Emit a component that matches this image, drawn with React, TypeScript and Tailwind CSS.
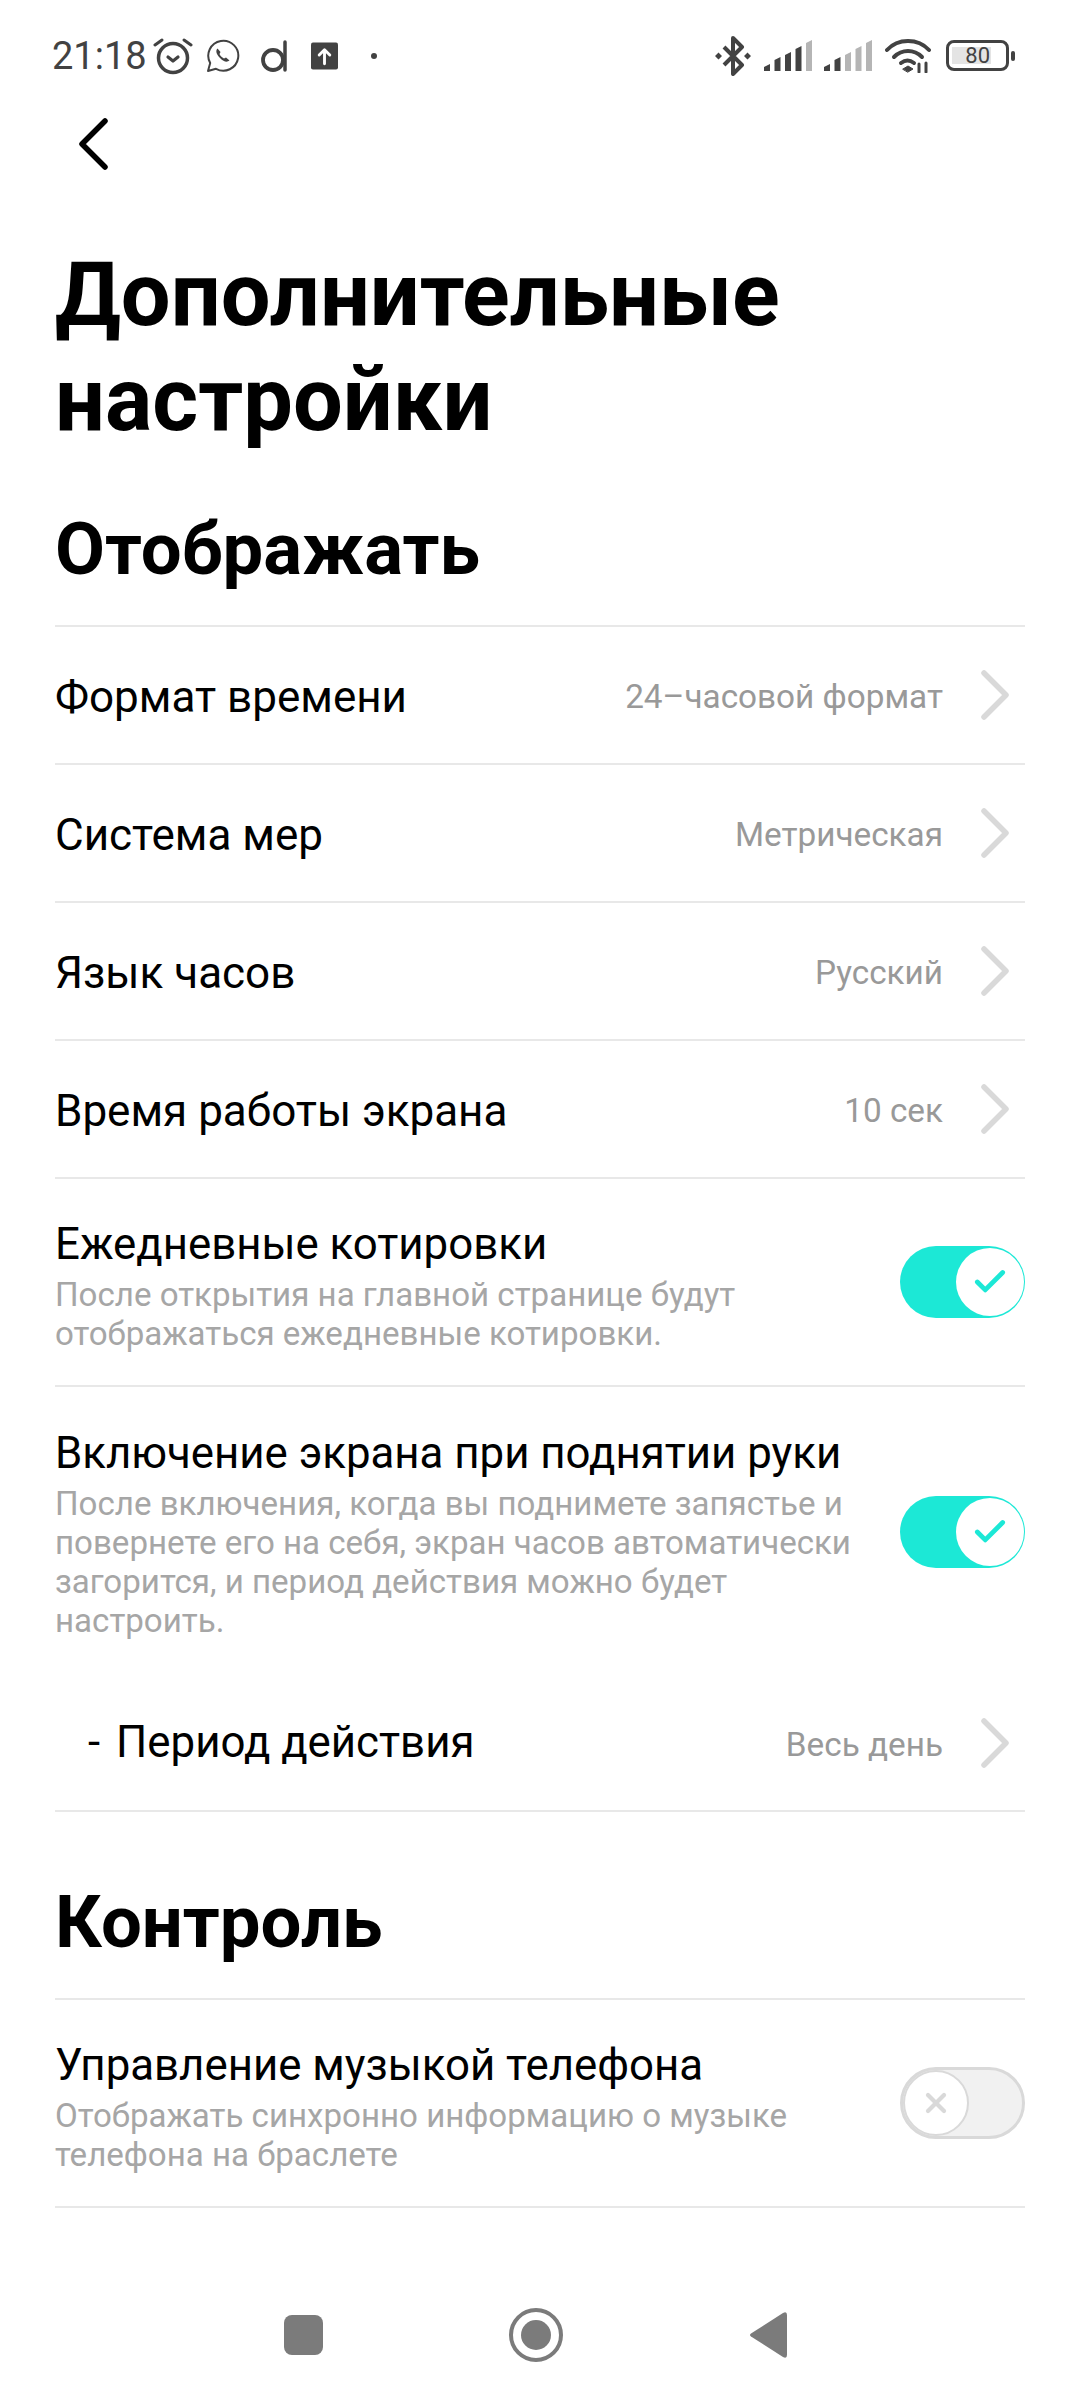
import { Check, X } from 'lucide-react';

const font = { fontFamily: 'Roboto, "Noto Sans", sans-serif' };

const Chevron = () => (
  <svg width="32" height="52" viewBox="0 0 32 52" className="shrink-0" fill="none">
    <path d="M4 4 L26 26 L4 48" stroke="#d9d9d9" strokeWidth="5.5" strokeLinecap="round" strokeLinejoin="round" />
  </svg>
);

const Toggle = ({ on }: { on: boolean }) =>
  on ? (
    <div className="flex h-[72px] w-[125px] shrink-0 items-center justify-end rounded-full bg-[#1ce8d6] p-[1px]">
      <div className="flex h-[68px] w-[68px] items-center justify-center rounded-full bg-white">
        <Check className="text-[#1ce8d6]" size={38} strokeWidth={3} />
      </div>
    </div>
  ) : (
    <div className="flex h-[72px] w-[125px] shrink-0 items-center justify-start rounded-full border-[3px] border-[#d9d9d9] bg-[#f1f1f1]">
      <div className="flex h-[66px] w-[66px] items-center justify-center rounded-full border-[2px] border-[#d9d9d9] bg-white">
        <X className="text-[#d9d9d9]" size={32} strokeWidth={3.2} />
      </div>
    </div>
  );

const Value = ({ text }: { text: string }) => (
  <div className="flex items-center gap-[37px] pr-[13px]">
    <span className="pt-[3px] text-[33.3px] leading-none text-[#999999]">{text}</span>
    <Chevron />
  </div>
);

const NavRow = ({ label, value }: { label: string; value: string }) => (
  <div className="flex h-[138px] items-center justify-between border-t-2 border-[#e8e8e8]">
    <span className="pt-[4px] text-[44px] leading-none text-black">{label}</span>
    <Value text={value} />
  </div>
);

const ToggleRow = ({ title, desc, on, className, textClass }: { title: string; desc: string[]; on: boolean; className: string; textClass?: string }) => (
  <div className={`flex items-center justify-between border-t-2 border-[#e8e8e8] ${className}`}>
    <div className={textClass}>
      <div className="text-[43.8px] leading-[61px] text-black">{title}</div>
      {desc.map(line => (
        <div key={line} className="text-[33.1px] leading-[39px] text-[#a6a6a6]">{line}</div>
      ))}
    </div>
    <Toggle on={on} />
  </div>
);

const SignalBars = ({ active }: { active: number }) => {
  const bars = [
    'M0 27l6-3v7H0z',
    'M10.500 20l6-3v14h-6z',
    'M21 15l6-3v19h-6z',
    'M31.500 9l6-3v25h-6z',
    'M42 3l6-3v31h-6z',
  ];
  return (
    <svg width="48" height="32" viewBox="0 0 48 32">
      {bars.map((d, i) => (
        <path key={d} d={d} fill={i < active ? '#424242' : '#b5b5b5'} />
      ))}
    </svg>
  );
};

const StatusBar = () => (
  <div className="flex h-[80px] items-center justify-between pl-[52px] pr-[65px] pt-[31px] text-[#424242]">
    <div className="flex items-center">
      <span className="text-[38px] leading-none">21:18</span>
      <svg width="40" height="38" viewBox="0 0 40 38" fill="none" stroke="#424242" className="ml-[6px]">
        <circle cx="20" cy="21" r="14.5" strokeWidth="3.5" />
        <path d="M15 20l5 4 5-4" strokeWidth="3.2" strokeLinecap="round" strokeLinejoin="round" />
        <path d="M2 8l7-5M38 8l-7-5" strokeWidth="3" strokeLinecap="round" />
      </svg>
      <svg width="34" height="34" viewBox="0 0 34 34" fill="none" stroke="#424242" className="ml-[13px]">
        <path d="M2 32l2.2-8A15 15 0 1 1 10 29.8z" strokeWidth="2" strokeLinejoin="round" />
        <path d="M11.500 9.500c-2 2-1.500 5.500 2.500 9.500s7 4.500 9.500 2.500l-3.500-3-2 1c-2-1-4-3-4.500-4.500l1-2z" fill="#424242" stroke="none" />
      </svg>
      <svg width="26" height="32" viewBox="0 0 26 32" fill="none" stroke="#424242" className="ml-[21px]">
        <circle cx="12" cy="20" r="10" strokeWidth="3.800" />
        <path d="M24 2v28" strokeWidth="3.500" strokeLinecap="round" />
      </svg>
      <svg width="27" height="28" viewBox="0 0 28 28" className="ml-[24px]">
        <rect width="28" height="28" rx="2" fill="#424242" />
        <path d="M14 22V8M8.500 13L14 7.500l5.500 5.500" stroke="#fff" strokeWidth="3" fill="none" strokeLinecap="round" strokeLinejoin="round" />
      </svg>
      <span className="ml-[33px] h-[6px] w-[6px] rounded-full bg-[#424242]" />
    </div>
    <div className="flex items-center">
      <svg width="36" height="40" viewBox="0 0 36 40" fill="none" stroke="#424242" strokeWidth="4" strokeLinejoin="round">
        <path d="M9 11l18 18-9 9V2l9 9L9 29" />
        <path d="M3.500 16.500l3.500 3.500-3.500 3.500L0 20zM32.500 16.500l3.500 3.500-3.500 3.500L29 20z" fill="#424242" stroke="none" />
      </svg>
      <div className="ml-[13px]"><SignalBars active={4} /></div>
      <div className="ml-[12px]"><SignalBars active={2} /></div>
      <svg width="46" height="34" viewBox="0 0 46 34" fill="none" stroke="#424242" strokeLinecap="round" className="ml-[13px]">
        <path d="M2 11C13-1 33-1 44 11" strokeWidth="4" />
        <path d="M9 18c8-8 20-8 28 0" strokeWidth="4" />
        <path d="M16 24c4-3 9-3 13 0" strokeWidth="4" />
        <path d="M18 30l5-3 5 3-5 3z" fill="#424242" strokeWidth="1" />
        <path d="M34 33v-8M41 33v-9" strokeWidth="3" />
      </svg>
      <div className="ml-[15px] flex items-center gap-[2px]">
        <div className="flex h-[31px] w-[63px] items-center justify-start rounded-[8px] border-[3px] border-[#424242] p-[3px]">
          <div className="flex h-[17px] w-[39px] items-center justify-end bg-[#e4e4e4] pr-[1px] text-[22px] leading-none text-[#424242]">80</div>
        </div>
        <div className="h-[10px] w-[4px] rounded-full bg-[#424242]" />
      </div>
    </div>
  </div>
);

const NavBar = () => (
  <div className="mt-auto flex h-[130px] items-center pl-[284px]">
    <div className="h-[40px] w-[39px] rounded-[8px] bg-[#7b7b7b]" />
    <div className="ml-[186px] flex h-[54px] w-[54px] items-center justify-center rounded-full border-[4px] border-[#7b7b7b]">
      <div className="h-[30px] w-[30px] rounded-full bg-[#7b7b7b]" />
    </div>
    <svg width="37" height="46" viewBox="0 0 37 46" className="ml-[187px]">
      <path d="M1 21.500 L33 1 Q37 -1 37 3 V43 Q37 47 33 45 L1 24.500 Q-1 23 1 21.500 Z" fill="#7b7b7b" />
    </svg>
  </div>
);

const App = () => (
  <div className="flex h-[2400px] w-[1080px] flex-col overflow-hidden bg-white" style={font}>
    <StatusBar />
    <div className="px-[55px]">
      <svg width="30" height="52" viewBox="0 0 30 52" fill="none" className="ml-[24px] mt-[38px] block">
        <path d="M26 3 L3 26 L26 49" stroke="#000" strokeWidth="5.500" strokeLinecap="round" strokeLinejoin="round" />
      </svg>
      <h1 className="mt-[73px] text-[88.3px] font-bold leading-[105px] text-black">Дополнительные<br />настройки</h1>
      <h2 className="mt-[55px] text-[72.5px] font-bold leading-[84px] text-black">Отображать</h2>
      <div className="mt-[33px]">
        <NavRow label="Формат времени" value="24–часовой формат" />
        <NavRow label="Система мер" value="Метрическая" />
        <NavRow label="Язык часов" value="Русский" />
        <NavRow label="Время работы экрана" value="10 сек" />
        <ToggleRow
          title="Ежедневные котировки"
          desc={['После открытия на главной странице будут', 'отображаться ежедневные котировки.']}
          on
          className="h-[208px]"
          textClass="pt-[3px]"
        />
        <ToggleRow
          title="Включение экрана при поднятии руки"
          desc={[
            'После включения, когда вы поднимете запястье и',
            'повернете его на себя, экран часов автоматически',
            'загорится, и период действия можно будет',
            'настроить.',
          ]}
          on
          className="h-[291px]"
        />
        <div className="flex h-[136px] items-center justify-between border-b-2 border-[#e8e8e8]">
          <span className="pl-[33px] text-[43.8px] leading-none text-black"><span className="mr-[16px]">-</span>Период действия</span>
          <Value text="Весь день" />
        </div>
      </div>
      <h2 className="mt-[69px] text-[72.5px] font-bold leading-[84px] text-black">Контроль</h2>
      <div className="mt-[33px] border-b-2 border-[#e8e8e8]">
        <ToggleRow
          title="Управление музыкой телефона"
          desc={['Отображать синхронно информацию о музыке', 'телефона на браслете']}
          on={false}
          className="h-[208px]"
          textClass="pt-[3px]"
        />
      </div>
    </div>
    <NavBar />
  </div>
);

export default App;
